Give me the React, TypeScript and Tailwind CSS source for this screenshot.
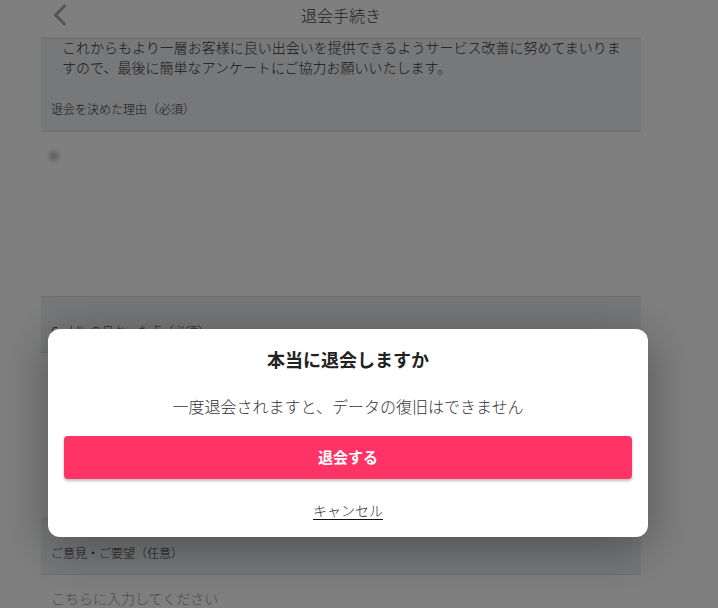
import { ChevronLeft } from "lucide-react";

const jp = "font-['Noto_Sans_CJK_JP','Noto_Sans',sans-serif]";

function SectionLabel({ children }: { children: React.ReactNode }) {
  return (
    <div className="h-[56px] bg-[#eff0f3] border-b border-[#dcdde0] flex items-end pl-[10px] pb-[12px]">
      <span className="text-[12px] leading-[18px] text-[#333] font-light">{children}</span>
    </div>
  );
}

export default function App() {
  return (
    <div className={`relative h-[608px] overflow-hidden bg-white ${jp}`}>
      <div className="ml-[41px] w-[600px]">
        {/* header */}
        <div className="relative h-[39px] border-b border-[#dcdde0] flex justify-center pt-[4px]">
          <ChevronLeft
            className="absolute left-[1px] top-[-3px] text-[#aaa]"
            size={36}
            strokeWidth={2}
          />
          <h1 className="text-[16px] leading-[22px] text-[#444] font-light">退会手続き</h1>
        </div>

        {/* intro */}
        <div className="bg-[#eff0f3] border-b border-[#dcdde0]">
          <p className="-mt-[2px] pl-[21px] pr-[19px] text-[14px] leading-[20px] text-[#333] font-light">
            これからもより一層お客様に良い出会いを提供できるようサービス改善に努めてまいりますので、最後に簡単なアンケートにご協力お願いいたします。
          </p>
          <div className="h-[54px] flex items-end pl-[10px] pb-[13px]">
            <span className="text-[12px] leading-[18px] text-[#333] font-light">退会を決めた理由（必須）</span>
          </div>
        </div>

        {/* reasons (loading) */}
        <div className="h-[165px] border-b border-[#dcdde0] pt-[19px] pl-[8px]">
          <div className="w-[10px] h-[10px] rounded-full bg-[#c4c4c4] blur-[2px]" />
        </div>

        <SectionLabel>Cuddleの良かった点（必須）</SectionLabel>
        <div className="h-[165px]" />

        <div className="border-t border-[#dcdde0]">
          <SectionLabel>ご意見・ご要望（任意）</SectionLabel>
        </div>
        <div className="pl-[10px] pt-[13px] text-[14px] leading-[20px] text-[#999] font-light">
          こちらに入力してください
        </div>
      </div>

      {/* overlay */}
      <div className="absolute inset-0 bg-black/50" />

      {/* dialog */}
      <div className="absolute left-[48px] top-[329px] w-[600px] rounded-[12px] bg-white px-4 pt-4 pb-4 text-center shadow-[0_10px_50px_rgba(0,0,0,0.35)]">
        <h2 className="text-[18px] leading-[28px] font-bold text-[#222]">本当に退会しますか</h2>
        <p className="mt-[21px] text-[16px] leading-[24px] text-[#333] font-light">
          一度退会されますと、データの復旧はできません
        </p>
        <button
          type="button"
          className="mt-[18px] w-full h-[43px] rounded-[4px] bg-[#ff3366] text-white text-[15px] font-bold shadow-[0_2px_3px_rgba(0,0,0,0.25)]"
        >
          退会する
        </button>
        <button
          type="button"
          className="mt-[21px] text-[14px] leading-[20px] text-[#333] font-light underline decoration-[#111] underline-offset-[3px]"
        >
          キャンセル
        </button>
      </div>
    </div>
  );
}
